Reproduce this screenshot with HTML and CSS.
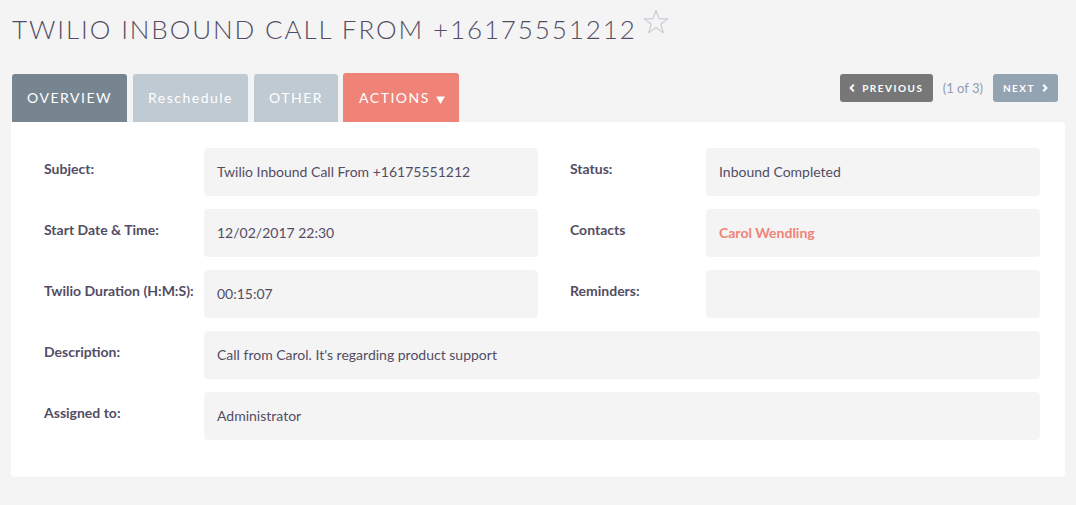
FILE: index.html
```html
<!DOCTYPE html>
<html lang="en">
<head>
  <meta charset="UTF-8" />
  <title>Twilio Inbound Call</title>
  <link rel="stylesheet" href="styles.css">
</head>
<body>
  <div class="page">
    <h1 class="title">
      Twilio Inbound Call From +16175551212
      <svg class="star" width="26" height="26" viewBox="0 0 26 26">
        <path d="M13 1.5 L16.1 9.6 L24.6 9.9 L17.9 15.2 L20.2 23.6 L13 18.8 L5.8 23.6 L8.1 15.2 L1.4 9.9 L9.9 9.6 Z" fill="none" stroke="#c6ccd4" stroke-width="1.2" stroke-linejoin="round"/>
      </svg>
    </h1>

    <div class="tabbar">
      <ul class="tabs">
        <li class="tab active">OVERVIEW</li>
        <li class="tab">Reschedule</li>
        <li class="tab">OTHER</li>
        <li class="tab actions">ACTIONS
          <svg class="caret" width="9" height="8" viewBox="0 0 9 8"><path d="M0 0.5 H9 L4.5 8 Z" fill="#fff"/></svg>
        </li>
      </ul>
      <div class="pager">
        <button class="pbtn prev">
          <svg class="chev" width="6" height="8" viewBox="0 0 6 8"><path d="M4.8 0.8 L1.6 4 L4.8 7.2" fill="none" stroke="#fff" stroke-width="2"/></svg>
          PREVIOUS
        </button>
        <span class="count">(1 of 3)</span>
        <button class="pbtn next">
          NEXT
          <svg class="chev" width="6" height="8" viewBox="0 0 6 8"><path d="M1.2 0.8 L4.4 4 L1.2 7.2" fill="none" stroke="#fff" stroke-width="2"/></svg>
        </button>
      </div>
    </div>

    <div class="panel">
      <div class="grid">
        <div class="label">Subject:</div>
        <div class="value">Twilio Inbound Call From +16175551212</div>
        <div class="label right">Status:</div>
        <div class="value">Inbound Completed</div>

        <div class="label">Start Date &amp; Time:</div>
        <div class="value">12/02/2017 22:30</div>
        <div class="label right">Contacts</div>
        <div class="value"><a class="link" href="#">Carol Wendling</a></div>

        <div class="label">Twilio Duration (H:M:S):</div>
        <div class="value">00:15:07</div>
        <div class="label right">Reminders:</div>
        <div class="value"></div>

        <div class="label">Description:</div>
        <div class="value wide">Call from Carol. It's regarding product support</div>

        <div class="label">Assigned to:</div>
        <div class="value wide">Administrator</div>
      </div>
    </div>
  </div>
</body>
</html>
```

FILE: styles.css
```css
body {
  margin: 0;
  background: #f4f4f4;
  font-family: Lato, 'Open Sans', sans-serif;
  color: #534d64;
}
.page {
  padding: 0 11px;
}
.title {
  margin: 0 0 29px 1px;
  padding-top: 13px;
  font-size: 26px;
  line-height: 32px;
  font-weight: 300;
  text-transform: uppercase;
  letter-spacing: 1.9px;
  color: #534d64;
  white-space: nowrap;
}
.star {
  position: relative;
  top: -4px;
  margin-left: -3px;
}
.tabbar {
  display: flex;
  justify-content: space-between;
  align-items: flex-start;
}
.tabs {
  list-style: none;
  margin: 0 0 0 1px;
  padding: 0;
  display: flex;
  gap: 6px;
}
.tab {
  height: 48px;
  line-height: 48px;
  padding: 0 15px;
  background: #c0cad2;
  color: #fff;
  font-size: 14px;
  letter-spacing: 1.5px;
  border-radius: 3px 3px 0 0;
  white-space: nowrap;
}
.tab.active {
  background: #778591;
}
.tab.actions {
  background: #f08377;
  height: 49px;
  margin-top: -1px;
  line-height: 50px;
  padding: 0 14px 0 16px;
  margin-left: -1px;
}
.caret {
  margin-left: 1px;
  vertical-align: -1px;
}
.pager {
  display: flex;
  align-items: center;
  gap: 10px;
  margin-right: 7px;
}
.pbtn {
  display: flex;
  align-items: center;
  justify-content: center;
  gap: 7px;
  height: 28px;
  border: none;
  border-radius: 3px;
  color: #fff;
  font-family: Lato, sans-serif;
  font-weight: 700;
  font-size: 10px;
  letter-spacing: 1.5px;
  padding: 0;
  white-space: nowrap;
  cursor: pointer;
}
.pbtn.prev {
  background: #777777;
  width: 93px;
}
.pbtn.next {
  background: #94a3b2;
  width: 65px;
}
.count {
  color: #8e9cb3;
  font-size: 13px;
}
.panel {
  background: #fff;
  border-radius: 0 4px 4px 4px;
  padding: 26px 25px 37px 33px;
}
.grid {
  display: grid;
  grid-template-columns: 160px 334px 168px 334px;
  row-gap: 13px;
}
.label {
  font-weight: 700;
  font-size: 14px;
  line-height: 20px;
  padding-top: 11px;
  color: #534d64;
}
.label.right {
  margin-left: 32px;
}
.value {
  background: #f4f4f4;
  border-radius: 4px;
  height: 48px;
  box-sizing: border-box;
  padding: 13px;
  font-size: 14px;
  line-height: 22px;
  color: #534d64;
}
.value.wide {
  grid-column: 2 / 5;
}
.link {
  color: #f08377;
  font-weight: 700;
  text-decoration: none;
}
```
